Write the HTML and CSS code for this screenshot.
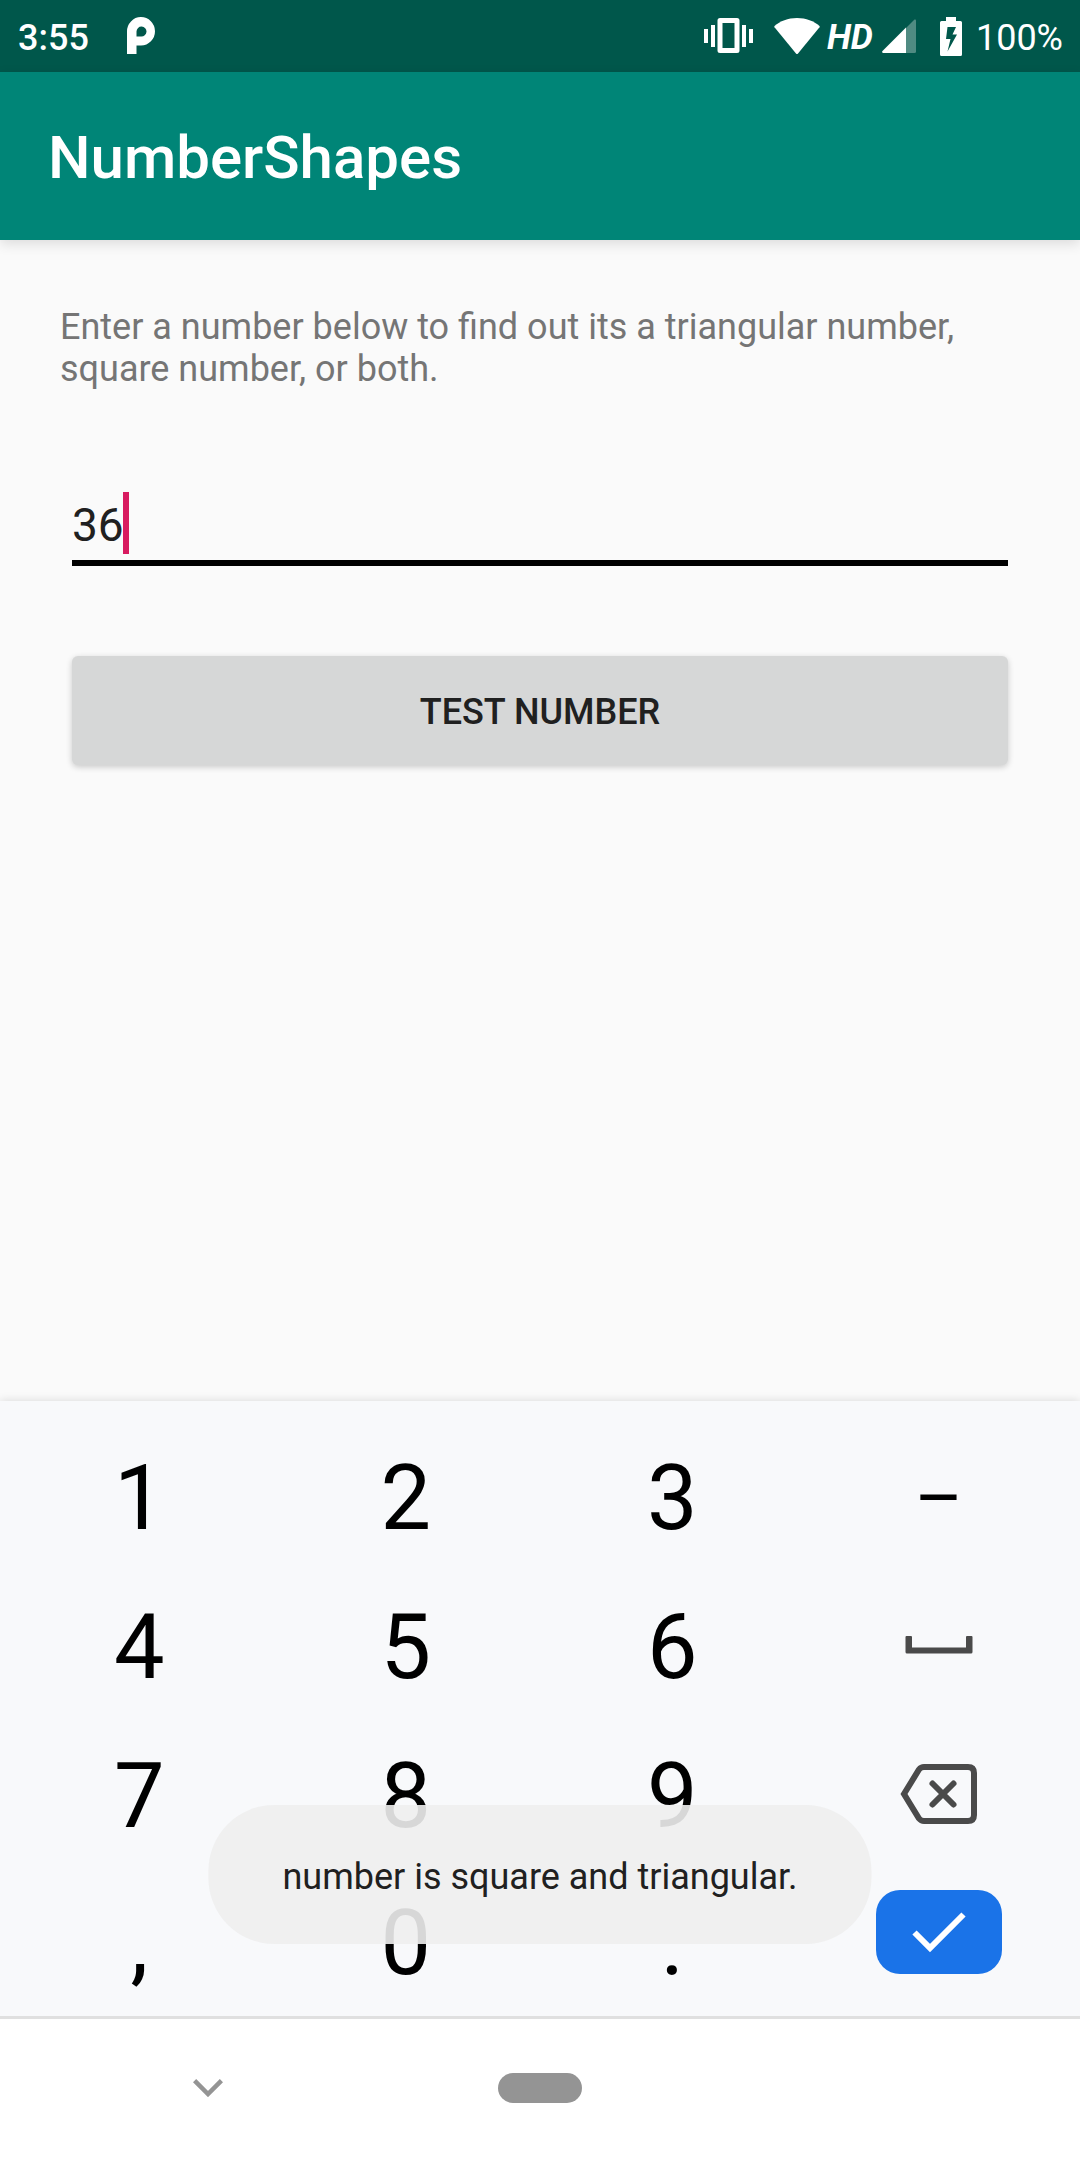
FILE: index.html
```html
<!DOCTYPE html>
<html lang="en">
<head>
  <meta charset="utf-8">
  <meta name="viewport" content="width=device-width, initial-scale=1">
  <title>NumberShapes</title>
  <link rel="stylesheet" href="styles.css">
</head>
<body>
  <div class="screen">
    <div class="status-bar">
      <span class="clock">3:55</span>
      <svg class="logo" width="30" height="38" viewBox="0 0 30 38" aria-hidden="true">
        <path fill="#fff" fill-rule="evenodd" d="M1 37V14.500A14 14.200 0 1 1 15 28.500H10.500V37ZM10.500 19.500H15A5 5 0 1 0 10.500 14.500Z"/>
      </svg>
      <div class="status-icons">
        <svg width="50" height="38" viewBox="0 0 50 38" aria-hidden="true">
          <path fill="none" stroke="#fff" stroke-width="5" stroke-linejoin="round" d="M16 3.500H33V33.500H16Z"/>
          <path fill="#fff" d="M0 12h4v14H0zM7 8h4v22H7zM38 8h4v22h-4zM45 12h4v14h-4z"/>
        </svg>
        <svg class="wifi" width="46" height="38" viewBox="0 0 46 38" aria-hidden="true">
          <path fill="#fff" d="M0.500 9C6 4 14 1 23 1S40 4 45.500 9Q46 9.500 45.500 10.200L24 36.500Q23 37.500 22 36.500L0.500 10.200Q0 9.500 0.500 9Z"/>
        </svg>
        <span class="hd">HD</span>
        <svg class="signal" width="34" height="34" viewBox="0 0 34 34" aria-hidden="true">
          <path fill="#508b82" d="M24 9L32.500 0.500Q34 0 34 1.500V32.500Q34 34 32.500 34H24Z"/>
          <path fill="#fff" d="M24 8.500V34H1Q-0.500 33.500 0.500 32Z"/>
        </svg>
        <svg class="battery" width="22" height="39" viewBox="0 0 22 39" aria-hidden="true">
          <path fill="#fff" fill-rule="evenodd" d="M6 0H16V4H20.500Q22 4 22 5.500V37.500Q22 39 20.500 39H1.500Q0 39 0 37.500V5.500Q0 4 1.500 4H6ZM7.500 10L6 22H10.500L7.500 34.500L17 17.500H12.500L16 10Z"/>
        </svg>
        <span class="percent">100%</span>
      </div>
    </div>

    <header class="app-bar">
      <h1 class="title">NumberShapes</h1>
    </header>

    <main class="content">
      <label class="prompt" for="number">Enter a number below to find out its a triangular number, square number, or both.</label>
      <div class="field">
        <input class="number-input" id="number" type="text" inputmode="numeric" value="36">
        <span class="caret"></span>
      </div>
      <button class="test-button" type="button">TEST NUMBER</button>
    </main>

    <div class="keyboard">
      <button class="key" type="button">1</button>
      <button class="key" type="button">2</button>
      <button class="key" type="button">3</button>
      <button class="key key-dash" type="button">–</button>
      <button class="key" type="button">4</button>
      <button class="key" type="button">5</button>
      <button class="key" type="button">6</button>
      <button class="key key-icon" type="button" aria-label="Space">
        <svg width="68" height="18" viewBox="0 0 68 18"><path fill="#4a4a4a" d="M1.500 0H6Q7 0 7 1V11.500H61V1Q61 0 62 0H66.500Q67.500 0 67.500 1V16Q67.500 17.500 66 17.500H2Q0.500 17.500 0.500 16V1Q0.500 0 1.500 0Z"/></svg>
      </button>
      <button class="key" type="button">7</button>
      <button class="key" type="button">8</button>
      <button class="key" type="button">9</button>
      <button class="key key-icon" type="button" aria-label="Delete">
        <svg width="78" height="60" viewBox="0 0 78 60" fill="none" stroke="#4a4a4a" stroke-width="6"><path d="M24 3H68Q74 3 74 9V51Q74 57 68 57H24Q21 57 19 54.500L4 30L19 5.500Q21 3 24 3Z"/><path stroke-linecap="round" d="M32.500 19.500L53.500 40.500M53.500 19.500L32.500 40.500"/></svg>
      </button>
      <button class="key" type="button">,</button>
      <button class="key" type="button">0</button>
      <button class="key" type="button">.</button>
      <button class="key key-enter" type="button" aria-label="Done">
        <span class="enter-face">
          <svg width="54" height="42" viewBox="0 0 54 42"><path fill="none" stroke="#fff" stroke-width="6" d="M2.500 21.500L18 37L51.500 3.500"/></svg>
        </span>
      </button>
    </div>

    <nav class="nav-bar">
      <button class="nav-button" type="button" aria-label="Hide keyboard">
        <svg width="30" height="18" viewBox="0 0 30 18"><path fill="none" stroke="#949494" stroke-width="4.500" d="M1.600 1.600L15 15L28.400 1.600"/></svg>
      </button>
      <button class="nav-button" type="button" aria-label="Home"><span class="pill"></span></button>
    </nav>

    <div class="toast" role="status">number is square and triangular.</div>
  </div>
</body>
</html>
```

FILE: styles.css
```css
* {
  box-sizing: border-box;
}

body {
  margin: 0;
  background: #fafafa;
  color: #202020;
  font-family: Roboto, "Liberation Sans", sans-serif;
  font-size: 36px;
  line-height: 42px;
}

button,
input {
  margin: 0;
  padding: 0;
  border: 0;
  background: none;
  color: inherit;
  font: inherit;
}

svg {
  display: block;
  flex: none;
}

.screen {
  position: relative;
  display: flex;
  flex-direction: column;
  min-height: 100vh;
}

.status-bar {
  display: flex;
  align-items: center;
  height: 72px;
  padding: 0 17px 0 18px;
  background: #00574b;
  color: #fff;
}

.clock,
.percent,
.hd {
  padding-top: 4px;
}

.clock {
  font-weight: 500;
}

.logo {
  margin-left: 37px;
}

.status-icons {
  display: flex;
  align-items: center;
  margin-left: auto;
}

.wifi {
  margin-left: 20px;
}

.hd {
  margin-left: 7px;
  font-size: 35px;
  font-style: italic;
  font-weight: 700;
}

.signal {
  margin-left: 9px;
}

.battery {
  margin-left: 24px;
}

.percent {
  margin-left: 14px;
}

.app-bar {
  display: flex;
  align-items: center;
  height: 168px;
  padding: 4px 48px 0;
  background: #008577;
  color: #fff;
  box-shadow: 0 4px 12px rgba(0, 0, 0, 0.12);
}

.title {
  margin: 0;
  font-size: 60px;
  font-weight: 500;
  line-height: 72px;
}

.content {
  display: flex;
  flex: 1;
  flex-direction: column;
  padding: 66px 60px;
}

.prompt {
  color: #757575;
}

.field {
  position: relative;
  display: flex;
  margin: 102px 12px 0;
}

.number-input {
  flex: 1;
  min-width: 0;
  height: 74px;
  padding-bottom: 2px;
  border-bottom: 6px solid #000;
  outline: 0;
  font-size: 46px;
}

.caret {
  position: absolute;
  top: 0;
  left: 51px;
  width: 6px;
  height: 62px;
  background: #d81b60;
}

.test-button {
  height: 109px;
  margin: 90px 12px 0;
  padding-top: 2px;
  border-radius: 6px;
  background: #d6d7d7;
  box-shadow: 0 2px 6px rgba(0, 0, 0, 0.2);
  font-weight: 500;
}

.keyboard {
  display: grid;
  grid-template-columns: repeat(4, 1fr);
  grid-template-rows: repeat(3, 149px) 145px;
  padding: 23px 8px 0 6px;
  background: #f8f9fb;
  box-shadow: 0 0 9px rgba(0, 0, 0, 0.14);
  color: #000;
}

.key {
  display: flex;
  align-items: center;
  justify-content: center;
  font-size: 90px;
  line-height: 108px;
}

.key-dash {
  font-size: 74px;
}

.key-icon {
  padding-bottom: 6px;
}

.key-enter {
  padding-bottom: 23px;
}

.enter-face {
  display: flex;
  align-items: center;
  justify-content: center;
  width: 126px;
  height: 84px;
  border-radius: 24px;
  background: #1a73e8;
}

.nav-bar {
  z-index: 1;
  display: grid;
  grid-template-columns: 1fr 248px 1fr;
  height: 144px;
  background: #fff;
  box-shadow: inset 0 3px #e0e0e0;
}

.nav-button {
  display: flex;
  align-items: center;
  justify-content: center;
}

.pill {
  width: 84px;
  height: 30px;
  border-radius: 15px;
  background: #949494;
}

.toast {
  position: absolute;
  bottom: 216px;
  left: 50%;
  z-index: 2;
  padding: 51px 74px 46px;
  transform: translateX(-50%);
  border-radius: 66px;
  background: rgba(238, 238, 238, 0.9);
  white-space: nowrap;
}
```
